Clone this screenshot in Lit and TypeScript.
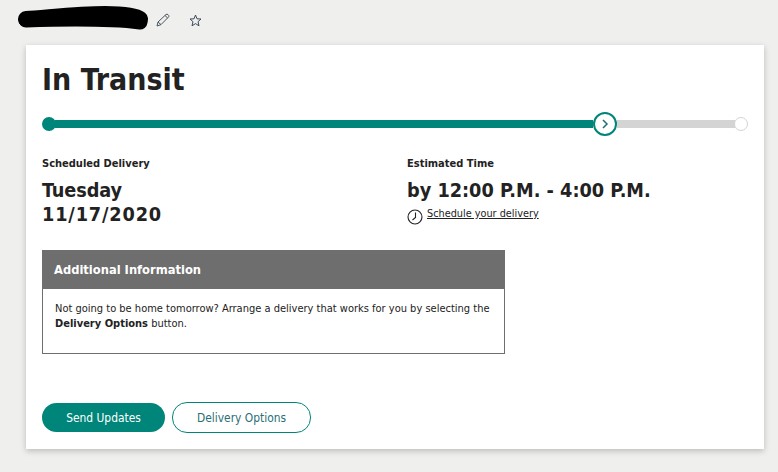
import { LitElement, html, css } from "lit";
import { customElement } from "lit/decorators.js";

@customElement("app-root")
export class AppRoot extends LitElement {
  static styles = css`
    :host {
      display: block;
      width: 778px;
      height: 472px;
      overflow: hidden;
      background: #efefee;
      font-family: "DejaVu Sans Condensed", "DejaVu Sans", sans-serif;
      color: #222;
    }
    .top {
      height: 45px;
      display: flex;
      align-items: flex-start;
      padding-left: 17px;
      box-sizing: border-box;
    }
    .blot { margin-top: 5px; display: block; }
    .pen { margin: 13px 0 0 7px; display: block; }
    .star { margin: 14px 0 0 19px; display: block; }
    .card {
      margin-left: 26px;
      width: 738px;
      height: 404px;
      box-sizing: border-box;
      background: #fff;
      box-shadow: 0 2px 6px rgba(0, 0, 0, 0.22);
      padding: 18px 16px 0;
      display: flex;
      flex-direction: column;
    }
    h1 {
      margin: 0;
      font-size: 30px;
      line-height: 34px;
      font-weight: 700;
    }
    .track {
      margin-top: 14px;
      height: 26px;
      display: flex;
      align-items: center;
      width: 706px;
    }
    .dot-start {
      width: 14px;
      height: 14px;
      border-radius: 50%;
      background: #00857a;
      flex: none;
    }
    .fill {
      height: 8px;
      width: 538px;
      background: #00857a;
      margin-left: -1px;
      flex: none;
    }
    .cur {
      width: 20px;
      height: 20px;
      border: 2px solid #00857a;
      border-radius: 50%;
      background: #fff;
      flex: none;
      display: flex;
      align-items: center;
      justify-content: center;
    }
    .rest {
      height: 8px;
      width: 118px;
      background: #d4d4d4;
      flex: none;
    }
    .dot-end {
      width: 12px;
      height: 12px;
      border: 1px solid #d4d4d4;
      border-radius: 50%;
      background: #fff;
      flex: none;
      margin-left: -1px;
    }
    .cols {
      margin-top: 19px;
      display: grid;
      grid-template-columns: 365px 1fr;
    }
    .label {
      font-size: 11px;
      line-height: 16px;
      font-weight: 700;
    }
    .big {
      margin-top: 7px;
      font-size: 19.7px;
      line-height: 24px;
      font-weight: 700;
    }
    .date { letter-spacing: 0.85px; }
    .day { letter-spacing: -0.1px; }
    .sched {
      display: flex;
      align-items: flex-start;
      gap: 4px;
      margin-top: 4px;
      font-size: 10.8px;
      line-height: 14px;
    }
    .sched svg { margin-top: 2px; display: block; }
    .sched a { color: #222; text-decoration: underline; }
    .info {
      margin-top: 23px;
      width: 463px;
      height: 104px;
      box-sizing: border-box;
      border: 1px solid #6e6e6e;
      border-top: 0;
    }
    .info-head {
      height: 39px;
      margin: 0 -1px;
      background: #6e6e6e;
      color: #fff;
      font-size: 12.8px;
      font-weight: 700;
      line-height: 39px;
      padding-left: 12px;
    }
    .info-body {
      padding: 12px 12px 0;
      font-size: 11px;
      line-height: 15px;
      color: #222;
    }
    .actions {
      margin-top: 48px;
      display: flex;
      align-items: center;
      gap: 7px;
    }
    button {
      font: inherit;
      font-size: 11.9px;
      border-radius: 15px;
      box-sizing: border-box;
      cursor: pointer;
    }
    .primary {
      width: 123px;
      height: 29px;
      background: #00857a;
      color: #fff;
      border: 0;
    }
    .secondary {
      width: 139px;
      height: 31px;
      background: #fff;
      color: #2a6f75;
      border: 1px solid #00857a;
    }
  `;

  render() {
    return html`
      <div class="top">
        <svg class="blot" width="132" height="26" viewBox="0 0 132 26">
          <path d="M9 14 C28 13 60 9 88 9 C105 9 118 10 123 14" fill="none" stroke="#000" stroke-width="16" stroke-linecap="round" />
          <path d="M9 15 C40 14 90 13 123 17" fill="none" stroke="#000" stroke-width="15" stroke-linecap="round" />
        </svg>
        <svg class="pen" width="14" height="14" viewBox="0 0 14 14" fill="none" stroke="#4a5560" stroke-width="1">
          <path d="M1 13 L2 9 L10 1.5 Q11 0.8 12 1.6 L12.7 2.4 Q13.2 3.4 12.5 4 L5 11.6 Z M2 9 L5 11.6 M9 2.5 L11.6 5" />
        </svg>
        <svg class="star" width="13" height="13" viewBox="0 0 13 13" fill="none" stroke="#3d4a5c" stroke-width="1">
          <path d="M6.5 1 L8 4.8 L12 5 L9 7.7 L10 11.8 L6.5 9.6 L3 11.8 L4 7.7 L1 5 L5 4.8 Z" />
        </svg>
      </div>
      <div class="card">
        <h1>In Transit</h1>
        <div class="track">
          <div class="dot-start"></div>
          <div class="fill"></div>
          <div class="cur">
            <svg width="8" height="10" viewBox="0 0 8 10" fill="none" stroke="#1f6f78" stroke-width="1.5">
              <path d="M2 1 L6 5 L2 9" />
            </svg>
          </div>
          <div class="rest"></div>
          <div class="dot-end"></div>
        </div>
        <div class="cols">
          <div>
            <div class="label">Scheduled Delivery</div>
            <div class="big"><span class="day">Tuesday</span><br /><span class="date">11/17/2020</span></div>
          </div>
          <div>
            <div class="label">Estimated Time</div>
            <div class="big">by 12:00 P.M. - 4:00 P.M.</div>
            <div class="sched">
              <svg width="16" height="16" viewBox="0 0 16 16" fill="none" stroke="#222" stroke-width="1.1">
                <circle cx="8" cy="8" r="7" />
                <path d="M8.5 3.5 L8.5 8.5 L5.5 11" />
              </svg>
              <a>Schedule your delivery</a>
            </div>
          </div>
        </div>
        <div class="info">
          <div class="info-head">Additional Information</div>
          <div class="info-body">
            Not going to be home tomorrow? Arrange a delivery that works for you by selecting the
            <b>Delivery Options</b> button.
          </div>
        </div>
        <div class="actions">
          <button class="primary">Send Updates</button>
          <button class="secondary">Delivery Options</button>
        </div>
      </div>
    `;
  }
}
